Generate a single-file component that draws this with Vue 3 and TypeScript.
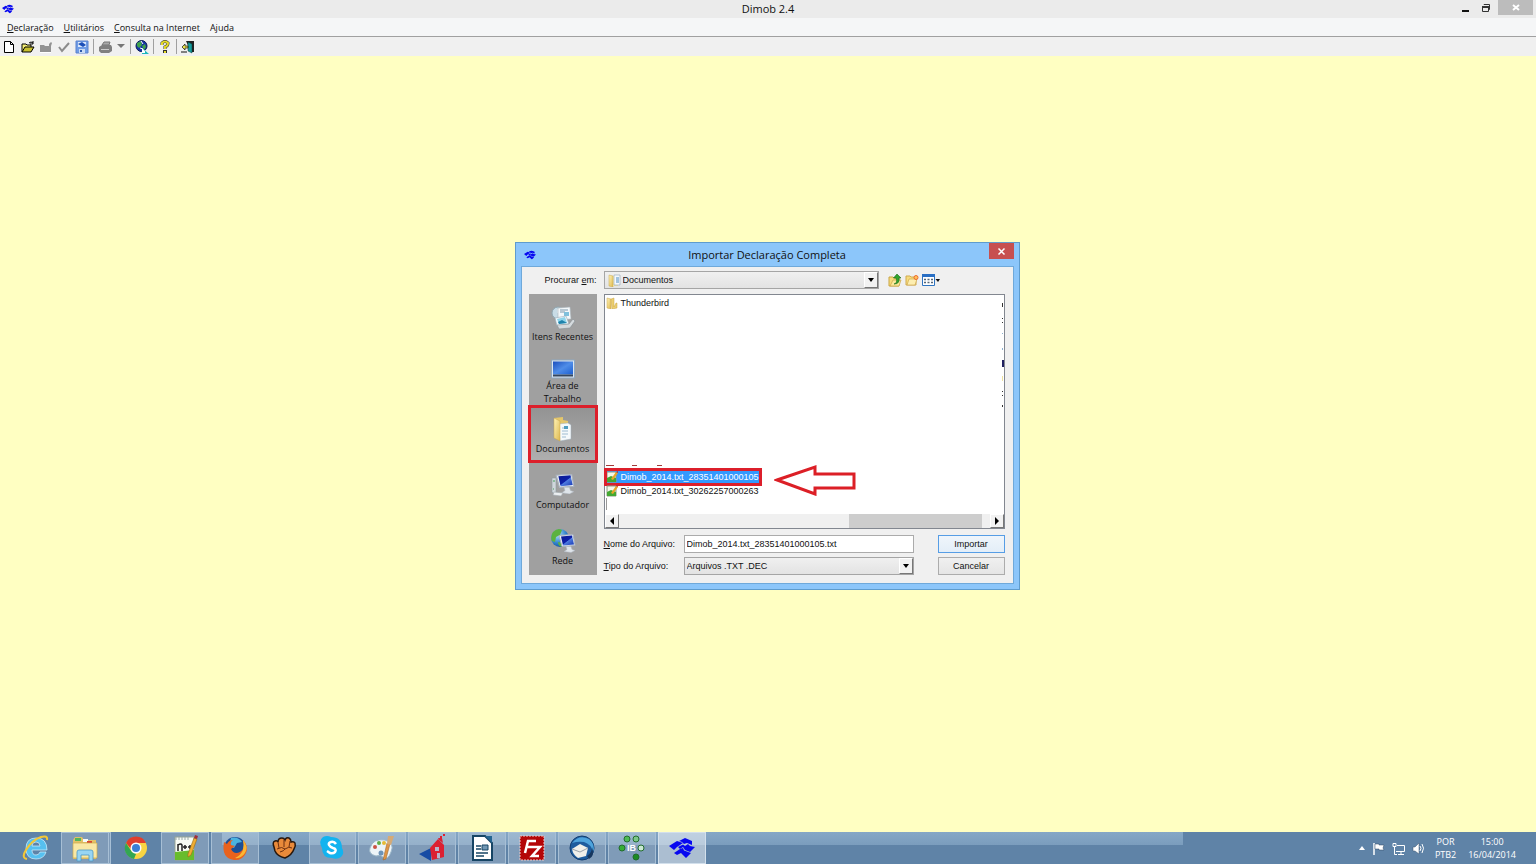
<script setup lang="ts">
import { ref } from 'vue'

interface MenuEntry { before: string; key: string; after: string }

const menus: MenuEntry[] = [
  { before: '', key: 'D', after: 'eclaração' },
  { before: '', key: 'U', after: 'tilitários' },
  { before: '', key: 'C', after: 'onsulta na Internet' },
  { before: 'A', key: 'j', after: 'uda' },
]

const files = ['Dimob_2014.txt_28351401000105', 'Dimob_2014.txt_30262257000263']
const selected = ref(0)
const fileName = ref('Dimob_2014.txt_28351401000105.txt')
const folder = ref('Documentos')
const fileType = ref('Arquivos .TXT .DEC')

function pick(index: number) {
  selected.value = index
  fileName.value = files[index] + '.txt'
}
</script>

<template>
  <div class="desktop">
    <svg class="defs" width="0" height="0" aria-hidden="true">
      <defs>
        <symbol id="ribbon" viewBox="0 0 26 20">
          <g fill="#0808f0">
            <path d="M0 8 L8 3 L14 5 L8 9 L5 12 Z" />
            <path d="M10 3 L16 0 L23 3 L23 7 L18 5 L15 6 L13 4 Z" />
            <path d="M9 9 L14 6.500 L16 8 L19 6 L21 8 L26 9 L21 14 L16 12 L14 9 L11 11 Z" />
            <path d="M5 15 L11 11 L14 10 L15 12.500 L22 15 L17 20 L12 15 L8 17 Z" />
          </g>
        </symbol>
        <linearGradient id="gold" x1="0" y1="0" x2="1" y2="1">
          <stop offset="0" stop-color="#fff3b8" /><stop offset="1" stop-color="#deb84e" />
        </linearGradient>
        <linearGradient id="screen" x1="0" y1="0" x2="1" y2="1">
          <stop offset="0" stop-color="#1b4fbe" /><stop offset="0.5" stop-color="#4f8de8" /><stop offset="1" stop-color="#1c5fd0" />
        </linearGradient>
        <linearGradient id="navy" x1="0" y1="0" x2="1" y2="1">
          <stop offset="0" stop-color="#0a1a90" /><stop offset="0.5" stop-color="#0c1fa8" /><stop offset="0.55" stop-color="#4e7be0" /><stop offset="1" stop-color="#1434b0" />
        </linearGradient>
        <radialGradient id="globe" cx="0.35" cy="0.3" r="0.8">
          <stop offset="0" stop-color="#b7e4fb" /><stop offset="0.6" stop-color="#2f83cc" /><stop offset="1" stop-color="#124a94" />
        </radialGradient>
        <symbol id="note" viewBox="0 0 12 12">
          <path d="M1 1h9v10H1z" fill="#f4f8ea" stroke="#8d9a86" />
          <path d="M1 7 L5 5 L10 7v4H1z" fill="#43a832" />
          <path d="M5 8 L10 1 L12 2 L7 9z" fill="#e9a528" /><path d="M10 1l2 1V0z" fill="#b52f2f" />
        </symbol>
        <symbol id="monitor" viewBox="0 0 20 18">
          <path d="M2 1 L16 0 L18 11 L5 12 Z" fill="#eef2f6" stroke="#aab4c0" />
          <path d="M4 2 L15 1 L17 10 L6 11 Z" fill="url(#navy)" />
          <path d="M9 12 L14 12 L15 15 L18 16 L14 18 L7 17 L10 15 Z" fill="#dfe5ea" stroke="#aeb7c0" stroke-width=".5" />
        </symbol>
      </defs>
    </svg>

    <header class="titlebar">
      <svg class="app-mark" viewBox="0 0 26 20"><use href="#ribbon" /></svg>
      <h1>Dimob 2.4</h1>
      <div class="window-controls">
        <button aria-label="Minimizar"><svg width="8" height="10"><path d="M1 7h7v2H1z" fill="#111" /></svg></button>
        <button aria-label="Restaurar"><svg width="10" height="10" fill="none" stroke="#333"><path d="M3 2V1.5h5.500V6.500H7" /><path d="M1.500 3.500h6v5h-6z" /><path d="M1 4h7" stroke-width="2" /></svg></button>
        <button class="close" aria-label="Fechar"><svg width="8" height="8"><path d="M1 1l6 5M7 1L1 6" stroke="#fff" stroke-width="2" /></svg></button>
      </div>
    </header>

    <nav class="menubar">
      <button v-for="m in menus" :key="m.after">{{ m.before }}<u>{{ m.key }}</u>{{ m.after }}</button>
    </nav>

    <div class="toolbar" role="toolbar">
      <button aria-label="Novo"><svg width="14" height="14"><path d="M1.500 1.500h6l3 3v8h-9zM7.500 1.500v3h3" fill="#fff" stroke="#000" /></svg></button>
      <button aria-label="Abrir"><svg width="14" height="14"><path d="M1 12V4h4l1 1h4v2" fill="#f4ef78" stroke="#000" /><path d="M1 12l3-5h9l-3 5z" fill="#c8c030" stroke="#000" /><path d="M8 3q2-2 4 0M12 1v3h-3" fill="none" stroke="#000" /></svg></button>
      <button aria-label="Fechar declaração"><svg width="14" height="14"><path d="M1 5h4l1 1h4V4l2-2 1 1-1 3v6H1z" fill="#929292" /><path d="M1 12.500h11" stroke="#fff" /></svg></button>
      <button aria-label="Verificar"><svg width="14" height="14"><path d="M2 7l3 4 7-8" fill="none" stroke="#8c8c8c" stroke-width="2" /></svg></button>
      <button aria-label="Gravar"><svg width="14" height="14"><path d="M1 1h12v12H1z" fill="#6f9ce6" stroke="#5a82cd" /><path d="M3 2h8v5H3z" fill="#dbe8fb" /><path d="M3 4l4-2 4 3-3 2z" fill="#1b4fb8" /><path d="M4 9h6v4H4z" fill="#c9dbf5" /><path d="M5 10h2v2H5z" fill="#2d5aac" /></svg></button>
      <span class="sep"></span>
      <button aria-label="Imprimir"><svg width="14" height="14"><path d="M4 5l2-3h6l-1 3z" fill="#aaa" stroke="#777" /><path d="M1 7l3-2h9l1 2v4l-3 2H3l-2-2z" fill="#808080" /><path d="M3 9.500h8" stroke="#ccc" /></svg></button>
      <button class="caret" aria-label="Opções de impressão"><svg width="8" height="5"><path d="M0 0h8L4 4z" fill="#777" /></svg></button>
      <span class="sep"></span>
      <button aria-label="Internet"><svg width="14" height="14"><circle cx="6.500" cy="6" r="5.500" fill="#1533a6" stroke="#0a1d58" /><path d="M2 3l4-2 1 4-3 3-2-2zM7 6l3-2 1 3-2 3z" fill="#3fa34c" /><path d="M6 1l2 3M8 9L5 8" stroke="#fff" /><path d="M7 8v6h7z" fill="#1cb9bd" /><path d="M7 8l3 3v2H7z" fill="#fff" /></svg></button>
      <span class="sep"></span>
      <button aria-label="Ajuda"><svg width="14" height="14"><path d="M4 5V3q3-3 6 0 0 3-3 4v2" fill="none" stroke="#333" stroke-width="3" /><path d="M4 5V3q3-3 6 0 0 3-3 4v2" fill="none" stroke="#e6dc28" stroke-width="2" /><path d="M5 10h4v3H5z" fill="#333" /><path d="M6 11h2v2H6z" fill="#e6dc28" /></svg></button>
      <span class="sep"></span>
      <button aria-label="Sair"><svg width="14" height="14"><path d="M5 1h8v11h-3" fill="#222" /><path d="M7 2l4 2v9l-4-2z" fill="#179e9e" stroke="#033" stroke-width=".5" /><path d="M1 7l3-3v2h3v2H4v2z" fill="#ece34a" stroke="#111" stroke-width=".7" /><path d="M0 12h6" stroke="#111" /></svg></button>
    </div>

    <main class="workspace">
      <section class="dialog" role="dialog" aria-labelledby="dialog-title">
        <header class="dialog-title">
          <svg class="app-mark" viewBox="0 0 26 20"><use href="#ribbon" /></svg>
          <h2 id="dialog-title">Importar Declaração Completa</h2>
          <button class="dialog-close" aria-label="Fechar"><svg width="9" height="9"><path d="M1.500 1.500l6 6M7.500 1.500l-6 6" stroke="#fff" stroke-width="1.500" /></svg></button>
        </header>

        <form class="dialog-body" @submit.prevent>
          <label class="look-label" for="folder">Procurar <u>e</u>m:</label>
          <div class="look-row">
            <div class="combo folder-combo">
              <svg class="combo-icon" width="13" height="13"><path d="M1 1l4 1v11l-4-1z" fill="url(#gold)" stroke="#c9a94a" stroke-width=".5" /><path d="M5 2h5v10H5z" fill="#f2e2a0" /><path d="M6 1h6v10H6z" fill="#f5f9fc" stroke="#8fa3b5" stroke-width=".6" /><path d="M8 4h3M8 6h3M8 8h3" stroke="#4c8cc4" /></svg>
              <select id="folder" v-model="folder"><option>Documentos</option></select>
              <span class="drop"></span>
            </div>
            <div class="look-tools">
              <button type="button" aria-label="Um nível acima"><svg width="14" height="14"><path d="M1 4h4l1 1h5v8H1z" fill="#f7dc7c" stroke="#c9a544" /><path d="M2 13l3-6h8l-2 6z" fill="#fbe99a" stroke="#c9a544" stroke-width=".7" /><path d="M6 11q4-1 2-6H5.500L9 1l4 4h-2q1 6-5 6z" fill="#31a52c" stroke="#1d6a1b" stroke-width=".6" /></svg></button>
              <button type="button" aria-label="Nova pasta"><svg width="14" height="14"><path d="M1 3h4l1 1h5v8H1z" fill="#f7dc7c" stroke="#d0a950" /><path d="M2 12l2-6h8l-2 6z" fill="#fdeeb0" stroke="#d0a950" stroke-width=".7" /><circle cx="11" cy="4.500" r="2" fill="#ffc35a" stroke="#ee6a30" /></svg></button>
              <button type="button" class="view" aria-label="Exibição"><svg width="18" height="14"><path d="M.5 1.500h12v11H.5z" fill="#fff" stroke="#2f74c0" /><path d="M0 1h13v3H0z" fill="#2a6fc4" /><path d="M2 6.500h9M2 9.500h9" stroke="#567" stroke-width="1.500" stroke-dasharray="2 1.500" /><path d="M13.500 6h4.500l-2 3z" fill="#111" /></svg></button>
            </div>
          </div>

          <nav class="places">
            <button type="button">
              <svg width="26" height="26"><circle cx="8" cy="9" r="6" fill="#c8dce6" stroke="#8ea5b0" /><path d="M8 5v4h4" stroke="#fff" fill="none" /><path d="M8 4l12-1 1 12-13 1z" fill="#f4f8fa" stroke="#a8b4bb" stroke-width=".6" /><path d="M10 6h8M10 8h5" stroke="#7c98ab" /><path d="M14 8h5v4h-5z" fill="#7fc0dc" /><path d="M5 14l11-2 3 8-12 2z" fill="#eef8fb" stroke="#98aab5" stroke-width=".6" /><path d="M7 15l8-2 2 6-8 1z" fill="#8fd4ea" /><path d="M8 18l4-2 5 3-8 1z" fill="#1f83ac" /><path d="M7 21l12-1 4-5 2 2-5 7-11 1z" fill="#d5dadd" stroke="#858e93" stroke-width=".6" /></svg>
              <span>Itens Recentes</span>
            </button>
            <button type="button">
              <svg width="26" height="20"><path d="M1.500 1h23v18h-23z" fill="#dce6ef" stroke="#8ea8c0" /><path d="M3 2.500h20v13H3z" fill="url(#screen)" /><path d="M3 15.500h20v2H3z" fill="#34465e" /></svg>
              <span>Área de Trabalho</span>
            </button>
            <button type="button" class="current">
              <svg width="26" height="26"><path d="M4 2l9 -1v3l5 1v17l-10 2z" fill="#e5c76b" /><path d="M8 8l10-1 3 2v14l-11 2z" fill="#f5f9fb" stroke="#9eafba" stroke-width=".5" /><path d="M4 2l6 3v20l-6-3z" fill="url(#gold)" stroke="#caa548" stroke-width=".5" /><path d="M12 12h6M12 15h6M12 18h6M12 21h4" stroke="#9fbcd1" /><path d="M14 10h4v3h-4z" fill="#4f9dc0" /></svg>
              <span>Documentos</span>
            </button>
            <button type="button">
              <svg width="26" height="26"><path d="M2 6h4v15H3l-1-1z" fill="#d0d7dc" stroke="#8f9aa3" stroke-width=".6" /><path d="M3 9h2M3 17h1" stroke="#4aa05c" /><svg x="4" y="2" width="22" height="20"><use href="#monitor" /></svg><path d="M4 20l9 1-2 3-8-1z" fill="#eceff1" stroke="#a1a9af" stroke-width=".6" /></svg>
              <span>Computador</span>
            </button>
            <button type="button">
              <svg width="26" height="26"><circle cx="10" cy="10" r="9" fill="url(#globe)" /><path d="M3 4q5-5 9-2l-2 5-4 2-1 5-3-1q-2-5 1-9zM8 14l4 1v4q-4-1-4-5z" fill="#5cb240" /><svg x="7" y="6" width="20" height="19"><use href="#monitor" /></svg></svg>
              <span>Rede</span>
            </button>
          </nav>

          <div class="pane">
            <div class="listbox">
              <ul class="entries">
                <li>
                  <button type="button" class="entry"><svg width="12" height="12"><path d="M1 1l4 1v10l-4-1z" fill="url(#gold)" stroke="#caa548" stroke-width=".5" /><path d="M5 2l3-1v9l2-4h1v5l-5 1z" fill="#eccf70" stroke="#caa548" stroke-width=".5" /></svg><span>Thunderbird</span></button>
                </li>
                <li v-for="(f, i) in files" :key="f" :class="{ 'first-file': i === 0 }">
                  <button type="button" class="entry" :class="{ chosen: selected === i }" @click="pick(i)"><svg width="12" height="12" viewBox="0 0 12 12"><use href="#note" /></svg><span>{{ f }}</span></button>
                </li>
              </ul>
              <svg class="clipped-right" width="3" height="110" aria-hidden="true"><path d="M1 4h1v4H1zM1 19h1v1H1zM1 23h1v1H1z" fill="#333" /><path d="M1 34h1v1H1zM1 49h1v2H1z" fill="#8db1d0" /><path d="M1 61h2v7H1z" fill="#202060" /><path d="M1 77h1v5H1z" fill="#eee2a0" /><path d="M1 92h1v1H1zM1 96h1v1H1zM1 106h1v2H1z" fill="#333" /></svg>
              <svg class="clipped-left" width="60" height="46" aria-hidden="true"><path d="M1 0h8v1H1zM27 0h5v1h-5zM52 0h5v1h-5z" fill="#a33a3a" /><path d="M1 33h1v12H1z" fill="#999" /></svg>
              <div class="scrollbar">
                <button type="button" aria-label="Rolar para a esquerda"><svg width="4" height="8"><path d="M4 0v8L0 4z" /></svg></button>
                <div class="track"><div class="thumb"></div></div>
                <button type="button" aria-label="Rolar para a direita"><svg width="4" height="8"><path d="M0 0v8l4-4z" /></svg></button>
              </div>
            </div>

            <div class="fields">
              <label for="file-name"><u>N</u>ome do Arquivo:</label>
              <input id="file-name" v-model="fileName" type="text" />
              <button type="submit" class="action primary">Importar</button>
              <label for="file-type"><u>T</u>ipo do Arquivo:</label>
              <div class="combo">
                <select id="file-type" v-model="fileType"><option>Arquivos .TXT .DEC</option></select>
                <span class="drop"></span>
              </div>
              <button type="button" class="action">Cancelar</button>
            </div>
          </div>
        </form>

        <svg class="pointer" width="84" height="32" aria-hidden="true"><path d="M3 16L41 3v7h39v14H41v6z" fill="#fff" stroke="#dc1f26" stroke-width="3" /></svg>
      </section>
    </main>

    <footer class="taskbar">
      <div class="sheen"></div>
      <div class="tasks">
        <button aria-label="Internet Explorer"><svg width="28" height="28"><path d="M24 18h-6q-1 3-4 3-4 0-4-5h15q0-12-11-12-10 0-10 10.500t10 10.500q8 0 10-7zM10 12q0-4 4-4t4 4z" fill="#56c0f0" stroke="#d5f2ff" stroke-width=".7" /><path d="M5 25q-6-1-1-9 6-10 15-13 7-2 6 3" fill="none" stroke="#f4c735" stroke-width="2" /></svg></button>
        <button class="open stacked" aria-label="Explorador de Arquivos"><svg width="28" height="28"><path d="M2 6l2-3h7l2 3h12v19H2z" fill="#e3c268" /><path d="M4 4h6v3H4z" fill="#55b559" /><path d="M12 5h5v3h-5z" fill="#f7fafa" /><path d="M16 7h5v2h-5z" fill="#d84434" /><path d="M2 9h24v15H2z" fill="#f9e8a5" stroke="#cda94c" stroke-width=".7" /><path d="M6 27v-9q0-2 2-2h12q2 0 2 2v9h-4v-6h-8v6z" fill="#98d5f3" stroke="#4b98c4" stroke-width=".8" /></svg></button>
        <button aria-label="Chrome"><svg width="28" height="28"><circle cx="14" cy="14" r="11" fill="#f8d443" /><path d="M4 9a11 11 0 0 1 20 0H14L9 15z" fill="#df3e2e" /><path d="M4 9l6 9 4 2-2 5A11 11 0 0 1 4 9z" fill="#33a652" /><circle cx="14" cy="14" r="5.500" fill="#f8faff" /><circle cx="14" cy="14" r="4" fill="#3b7fd4" /></svg></button>
        <button class="open" aria-label="Notepad++"><svg width="28" height="28"><path d="M4 3h19v23H4z" fill="#f8fbf4" stroke="#97a394" /><path d="M4 18l19-2v10H4z" fill="#68bc2c" /><path d="M5 3v3M8 3v3M11 3v3M14 3v3M17 3v3" stroke="#9aa" /><path d="M7 17v-7M7 11q3-2 4 0v6M12 13h4M14 11v4M17 13h4M19 11v4" fill="none" stroke="#222" stroke-width="1.500" /><path d="M17 20L23 4l3 1-6 16-3 2z" fill="#efad33" stroke="#9a6b15" stroke-width=".6" /><path d="M23 4l3 1 1-3-3-1z" fill="#a22f3a" /></svg></button>
        <button class="open" aria-label="Firefox"><svg width="28" height="28"><circle cx="14" cy="14" r="11" fill="#1d4f95" /><path d="M10 4q7-2 11 4l-5 1-3 5-5-2z" fill="#4bb3df" /><path d="M3 8l3 2q2-4 6-4-3 2-2 5l4 1-4 3q3 6 9 3 6-4 3-12 6 6 3 13-4 8-12 7Q0 24 3 8z" fill="#ea621d" /><path d="M22 6q6 7 2 13-4 6-10 5 6-3 8-8 1-5 0-10z" fill="#fab733" /></svg></button>
        <button aria-label="Garra"><svg width="28" height="28"><path d="M4 13Q2 8 5 7q2-1 3 1 0-4 4-4 2 0 3 2 1-3 4-2 2 1 2 4 3-1 4 1 1 3-1 6-2 6-9 9Q7 22 5 17z" fill="#e98a3a" stroke="#28180e" stroke-width="1.500" /><path d="M8 8l1 6M14 6v7M20 7l-1 6M7 15q5-3 8 0 4-3 7-1M10 18q4-1 5-3" fill="none" stroke="#6e3010" /></svg></button>
        <button class="open" aria-label="Skype"><svg width="28" height="28"><path d="M5 3q4-2 8 0 11 0 11 11 3 5-1 9-4 3-9 1Q4 24 4 14 0 7 5 3z" fill="#13b3ef" /><path d="M18 10q-2-3-5-2-3 1-2 3 1 2 4 3 4 1 2 4-2 2-5 1l-3-2" fill="none" stroke="#fff" stroke-width="2.500" /></svg></button>
        <button class="open" aria-label="Paint"><svg width="28" height="28"><path d="M2 14Q5 4 17 6q10 3 6 12-3 8-7 6-3-4-8-2-8-2-6-8z" fill="#edf4f8" stroke="#9cb8ca" /><circle cx="7" cy="13" r="2" fill="#c95346" /><circle cx="11" cy="9" r="2" fill="#5fae48" /><circle cx="16" cy="9" r="2" fill="#e5bb37" /><circle cx="13" cy="19" r="2.500" fill="#6c93b8" /><path d="M15 26l4-17 3 1-4 15z" fill="#df9545" stroke="#96602a" stroke-width=".5" /><path d="M19 10l1-8 6 0-3 9z" fill="#d4aa77" /></svg></button>
        <button class="open" aria-label="Imobiliária"><svg width="28" height="28"><path d="M1 20l12-6v13z" fill="#174ca4" /><path d="M12 14l8-9 6 6v12l-12 3z" fill="#dc2032" /><path d="M21 6l-1-2h4l1 5zM22 2h2v2h-2zM25 0h2v2h-2z" fill="#dc2032" /><path d="M17 13h4v4h-4zM19 19h3v5h-3z" fill="#b9b4cc" /></svg></button>
        <button class="open" aria-label="Writer"><svg width="28" height="28"><path d="M5 2h12l7 7v17H5z" fill="#fff" stroke="#174565" stroke-width="2" /><path d="M17 2h7v7z" fill="#246591" /><path d="M8 12h5M8 15h5M8 19h12M8 22h8" stroke="#174565" stroke-width="1.500" /><path d="M14 11h6v5h-6z" fill="#7197b4" stroke="#174565" /></svg></button>
        <button class="open" aria-label="FileZilla"><svg width="28" height="28"><path d="M2 2h24v24H2z" fill="#b40608" stroke="#ecc7c7" stroke-dasharray="2 1" /><path d="M7 19L10 7h8M9 13h6M14 13h8l-8 9h7" fill="none" stroke="#fff" stroke-width="2.500" /></svg></button>
        <button class="open" aria-label="Thunderbird"><svg width="28" height="28"><circle cx="14" cy="14" r="12" fill="#1d5c9e" stroke="#123e70" /><path d="M4 9q7-9 17-4 7 6 4 13-2-8-9-10-6-1-12 1z" fill="#4da3dc" /><path d="M4 15l8-5 8 4-2 8-8 2q-5-3-6-9z" fill="#f0f0ea" /><path d="M4 15l8 3 8-4" fill="none" stroke="#9aa3ab" /><path d="M19 22q5-3 5-9 3 9-3 12z" fill="#17375e" /></svg></button>
        <button class="open" aria-label="IB"><svg width="28" height="28"><g stroke="#216c2d"><circle cx="9" cy="5" r="3" fill="#4dbb55" /><circle cx="18" cy="5" r="3" fill="#7bc789" /><circle cx="4" cy="14" r="3" fill="#35ae35" /><circle cx="23" cy="14" r="3" fill="#c9e9d2" /><circle cx="18" cy="23" r="3" fill="#1b8a22" /></g><text x="9" y="17" class="ib">IB</text></svg></button>
        <button class="open active" aria-label="Dimob"><svg width="28" height="28"><svg x="1" y="4" width="26" height="20"><use href="#ribbon" /></svg></svg></button>
      </div>
      <div class="tray">
        <button aria-label="Mostrar ícones ocultos"><svg width="6" height="4"><path d="M0 4h6L3 0z" fill="#fff" /></svg></button>
        <button aria-label="Central de Ações"><svg width="13" height="13"><path d="M2 1v12" stroke="#fff" stroke-width="1.500" /><path d="M3 2h4v1h5l-1 3 1 2H7V7H3z" fill="#fff" stroke="#334b66" stroke-width=".5" /></svg></button>
        <button aria-label="Rede"><svg width="13" height="13" fill="none" stroke="#fff"><path d="M5 3.500h7.500v6H4M6 12.500h6M9 10v2M1 1.500h3v3H1zM2.500 5v7.500H5" /></svg></button>
        <button aria-label="Volume"><svg width="13" height="13"><path d="M1 5h2l4-4v11L3 9H1z" fill="#fff" stroke="#40566e" stroke-width=".5" /><path d="M8 4q2 2 0 5M10 2q3 4 0 9" fill="none" stroke="#fff" /></svg></button>
        <div class="lang"><span>POR</span><span>PTB2</span></div>
        <time class="clock" datetime="2014-04-16T15:00"><span>15:00</span><span>16/04/2014</span></time>
      </div>
    </footer>
  </div>
</template>

<style>
body {
  margin: 0;
}
</style>

<style scoped>
.desktop {
  display: flex;
  flex-direction: column;
  min-height: 100vh;
  background: #ffffc2;
  color: #111;
  font: 9px/12px "Open Sans", "Noto Sans", sans-serif;
}
.desktop *, .desktop *::before { box-sizing: border-box; }
.defs { position: absolute; }
svg { display: block; flex: none; }
button {
  display: flex;
  align-items: center;
  justify-content: center;
  margin: 0;
  padding: 0;
  border: 0;
  background: none;
  color: inherit;
  font: inherit;
}
h1, h2 { margin: 0; font-size: 11px; font-weight: 400; }
u { text-underline-offset: 1px; }

.titlebar {
  display: grid;
  grid-template-columns: 1fr auto 1fr;
  align-items: center;
  height: 18px;
  background: #ebebeb;
}
.app-mark { width: 12px; height: 10px; }
.titlebar .app-mark { margin-left: 2px; }
.window-controls {
  display: flex;
  align-self: start;
  justify-content: flex-end;
  gap: 12px;
  height: 15px;
  padding-right: 3px;
}
.window-controls .close { width: 35px; margin-left: -5px; background: #bcbcbc; }

.menubar {
  display: flex;
  gap: 10px;
  height: 19px;
  padding: 1px 7px 0;
  border-bottom: 1px solid #a0a0a0;
  background: #f5f6f7;
}

.toolbar {
  display: flex;
  align-items: center;
  height: 19px;
  padding-left: 1px;
  background: #f0f0f0;
}
.toolbar button { width: 18px; height: 18px; }
.toolbar .caret { width: 14px; }
.sep { width: 1px; height: 15px; margin: 0 2px; background: #a0a0a0; }

.workspace {
  display: flex;
  flex: 1;
  align-items: flex-start;
  justify-content: center;
  padding: 186px 18px 24px 16px;
}
.dialog {
  position: relative;
  width: 505px;
  padding: 0 5px 5px;
  border: 1px solid #5f9ccd;
  background: #8cc6fa;
}
.dialog-title {
  display: grid;
  grid-template-columns: 1fr auto 1fr;
  align-items: center;
  height: 23px;
}
.dialog-title .app-mark { margin-left: 3px; }
.dialog-close {
  align-self: start;
  justify-self: end;
  width: 25px;
  height: 16px;
  background: #c75050;
}
.dialog-body {
  display: grid;
  grid-template-columns: 68px 1fr;
  gap: 5px 7px;
  padding: 4px 8px 8px 7px;
  border: 1px solid #6fa9da;
  background: #f0f0f0;
  font-family: "Liberation Sans", Arial, sans-serif;
}
.look-label { align-self: center; text-align: right; }
.look-row { display: flex; gap: 9px; }
.look-tools { display: flex; align-items: center; gap: 2px; }
.look-tools button { width: 15px; }
.look-tools .view { width: 18px; }

.combo {
  display: flex;
  position: relative;
  height: 18px;
  border: 1px solid #a5a5a5;
  background: linear-gradient(#f0f0f0, #e3e3e3);
}
.folder-combo { width: 275px; }
.combo-icon { align-self: center; margin-left: 3px; }
.combo select {
  flex: 1;
  min-width: 0;
  padding: 0 16px 0 2px;
  border: 0;
  outline: 0;
  appearance: none;
  background: none;
  color: inherit;
  font: inherit;
}
.drop {
  display: grid;
  place-items: center;
  position: absolute;
  top: 0;
  right: 0;
  width: 14px;
  height: 16px;
  border: 1px solid #fff;
  border-right-color: #777;
  border-bottom-color: #777;
  background: #f2f2f2;
  pointer-events: none;
}
.drop::before {
  content: "";
  border: 3px solid transparent;
  border-top: 4px solid #000;
  border-bottom: 0;
}

.places {
  display: grid;
  grid-auto-rows: 56px;
  padding-bottom: 1px;
  background: #a0a0a0;
  font: 9px/13px "Open Sans", "Noto Sans", sans-serif;
}
.places button {
  flex-direction: column;
  justify-content: flex-start;
  padding-top: 10px;
}
.places span { max-width: 66px; }
.places button:nth-child(2) { padding-top: 9px; }
.places button:nth-child(2) span { max-width: 44px; }
.places .current {
  outline: 3px solid #dc1f2b;
  outline-offset: -2px;
  background: linear-gradient(#929292, #b0b0b0);
}

.pane { display: flex; flex-direction: column; gap: 6px; }
.listbox {
  display: flex;
  flex: 1;
  flex-direction: column;
  position: relative;
  border: 1px solid #828790;
  background: #fff;
}
.entries {
  display: flex;
  flex: 1;
  flex-direction: column;
  align-items: flex-start;
  margin: 0;
  padding: 1px 1px 16px;
  list-style: none;
}
.entries .first-file { margin-top: auto; }
.entry { gap: 3px; height: 14px; padding-right: 1px; }
.entry.chosen {
  outline: 3px solid #dc1f2b;
  outline-offset: -1px;
  background: #3399ff;
  color: #fff;
}
.clipped-right { position: absolute; top: 4px; right: 0; }
.clipped-left { position: absolute; bottom: 17px; left: 0; pointer-events: none; }
.scrollbar { display: flex; height: 14px; background: #f0f0f0; }
.scrollbar button {
  width: 14px;
  border: 1px solid #fff;
  border-right-color: #777;
  border-bottom-color: #777;
  background: #f2f2f2;
}
.track { flex: 1; }
.thumb { width: 36%; height: 100%; margin-left: 62%; background: #cdcdcd; }

.fields {
  display: grid;
  grid-template-columns: 74px 1fr 85px;
  gap: 4px 6px;
  align-items: center;
}
.fields input {
  width: 100%;
  height: 18px;
  padding: 0 2px;
  border: 1px solid #ababab;
  outline: 0;
  background: #fff;
  color: inherit;
  font: inherit;
}
.action {
  justify-self: end;
  width: 67px;
  height: 18px;
  border: 1px solid #acacac;
  background: linear-gradient(#f0f0f0, #e5e5e5);
}
.action.primary {
  border-color: #569de5;
  background: linear-gradient(#eff5fb, #e3eef8);
}
.pointer { position: absolute; top: 221px; left: 258px; }

.taskbar {
  display: flex;
  justify-content: space-between;
  position: relative;
  height: 32px;
  padding: 0 20px 0 13px;
  background: #5f83a7;
  color: #fff;
}
.sheen {
  position: absolute;
  top: 0;
  left: 222px;
  width: 961px;
  height: 13px;
  background: linear-gradient(#85a7c6, #7b9dbd);
}
.tasks { display: flex; position: relative; gap: 2px; width: 693px; }
.tasks button { flex: 1; min-width: 0; }
.tasks .open {
  border: 1px solid #a7bfd5;
  background: rgb(255 255 255 / 20%);
}
.tasks .stacked { border-right: 3px double #a7bfd5; }
.tasks .active { border-color: #d3e0ec; background: rgb(255 255 255 / 48%); }
.ib { fill: #fff; font: bold 9px "Liberation Sans", sans-serif; }
.tray { display: flex; align-items: center; gap: 7px; }
.lang, .clock {
  display: flex;
  flex-direction: column;
  align-items: center;
  line-height: 13px;
}
.lang { margin-left: 3px; }
.clock { margin-left: 5px; }
</style>
